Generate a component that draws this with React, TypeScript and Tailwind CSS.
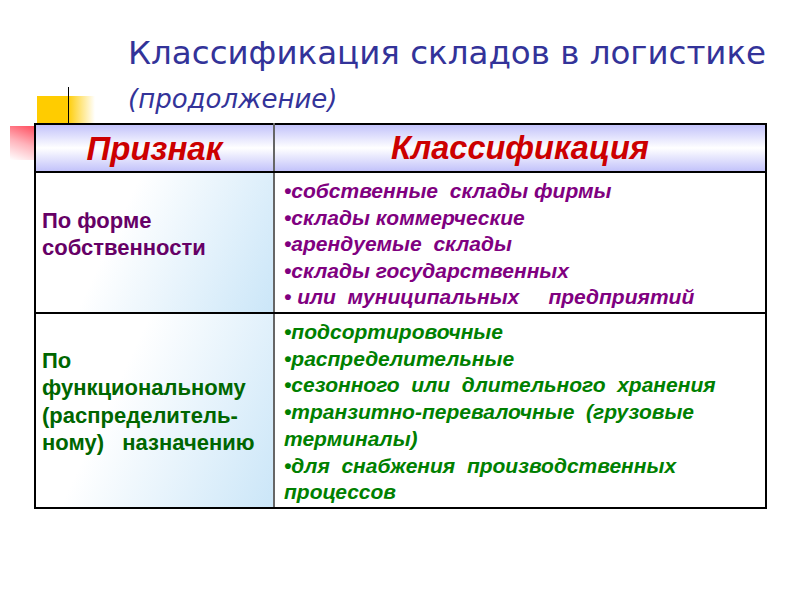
import React from "react";

const rowOne = [
  "•собственные  склады фирмы",
  "•склады коммерческие",
  "•арендуемые  склады",
  "•склады государственных",
  "• или  муниципальных     предприятий",
];

const rowTwo = [
  "•подсортировочные",
  "•распределительные",
  "•сезонного  или  длительного  хранения",
  "•транзитно-перевалочные  (грузовые",
  "терминалы)",
  "•для  снабжения  производственных",
  "процессов",
];

export default function App() {
  return (
    <div className="relative w-[800px] h-[600px] bg-white overflow-hidden">
      {/* decoration */}
      <div className="absolute left-[37px] top-[96px] w-[58px] h-[27px] bg-[linear-gradient(90deg,#ffcc00_0%,#ffcc00_52%,#ffffff_100%)]" />
      <div className="absolute left-[68px] top-[87px] w-px h-[36px] bg-black" />
      <div className="absolute left-[10px] top-[126px] w-[24px] h-[34px] bg-[linear-gradient(200deg,#ff4d5e_0%,#ffb3bb_50%,#ffffff_100%)]" />

      <div className="relative pl-[128px] pt-[33px] text-[#333399] font-['DejaVu_Sans',sans-serif]">
        <h1 className="text-[32.5px] leading-[40px]">
          Классификация складов в логистике
        </h1>
        <p className="mt-[11px] text-[26px] leading-[30px] italic">
          (продолжение)
        </p>
      </div>

      <table className="relative mt-[9px] ml-[34px] w-[733px] border-collapse border-2 border-black font-['Liberation_Sans',Arial,sans-serif]">
        <tbody>
          <tr className="h-[48px] bg-[linear-gradient(180deg,#c0c0fa_0%,#ffffff_50%,#c0c0fa_100%)]">
            <th className="w-[239px] p-0 border-2 border-black border-r-[#666] text-[33px] leading-none font-bold italic text-[#cc0000] text-center">
              Признак
            </th>
            <th className="p-0 border-2 border-black text-[32.5px] leading-none font-bold italic text-[#cc0000] text-center">
              Классификация
            </th>
          </tr>
          <tr className="h-[141px]">
            <td className="border-2 border-black border-r-[#666] align-middle pl-[6px] pb-[18px] bg-[linear-gradient(115deg,#ffffff_35%,#cbe6f8_100%)] text-[22px] leading-[27px] font-bold text-[#660066]">
              По форме
              <br />
              собственности
            </td>
            <td className="border-2 border-black align-top pl-[9px] pt-[5px] text-[21px] leading-[26.5px] font-bold italic text-[#800080]">
              {rowOne.map((l) => (
                <div key={l} className="whitespace-pre">
                  {l}
                </div>
              ))}
            </td>
          </tr>
          <tr className="h-[195px]">
            <td className="border-2 border-black border-r-[#666] align-middle pl-[6px] pb-[18px] bg-[linear-gradient(115deg,#ffffff_35%,#cbe6f8_100%)] text-[22px] leading-[27.5px] font-bold text-[#006600]">
              По
              <br />
              функциональному
              <br />
              (распределитель-
              <br />
              <span className="whitespace-pre">ному)   назначению</span>
            </td>
            <td className="border-2 border-black align-top pl-[9px] pt-[5px] text-[21px] leading-[26.7px] font-bold italic text-[#008000]">
              {rowTwo.map((l) => (
                <div key={l} className="whitespace-pre">
                  {l}
                </div>
              ))}
            </td>
          </tr>
        </tbody>
      </table>
    </div>
  );
}
